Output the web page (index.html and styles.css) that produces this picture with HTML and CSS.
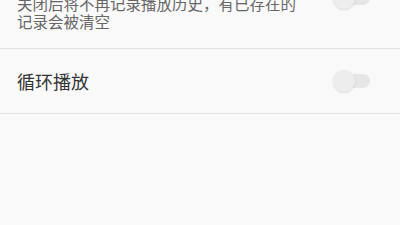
FILE: index.html
```html
<!DOCTYPE html>
<html lang="zh-CN">
<head>
    <meta charset="UTF-8">
    <meta name="viewport" content="width=device-width, initial-scale=1.0">
    <title>播放设置</title>
    <link rel="stylesheet" href="styles.css">
</head>
<body>
    <div class="settings">
        <div class="item item-top">
            <div class="item-text">
                <div class="summary">关闭后将不再记录播放历史，有已存在的记录会被清空</div>
            </div>
            <div class="toggle">
                <div class="track"></div>
                <div class="knob"></div>
            </div>
        </div>

        <div class="item item-single">
            <div class="item-text">
                <div class="title">循环播放</div>
            </div>
            <div class="toggle">
                <div class="track"></div>
                <div class="knob"></div>
            </div>
        </div>
    </div>
</body>
</html>
```

FILE: styles.css
```css
body {
    margin: 0;
    padding: 0;
    background-color: #f9f9f9;
    font-family: "Noto Sans CJK SC", "Noto Sans", sans-serif;
    overflow: hidden;
}

.settings {
    margin-top: -52px;
}

.item {
    display: flex;
    align-items: center;
    padding: 0 30px 0 17px;
    border-bottom: 1px solid #e2e2e2;
}

.item-top .item-text {
    padding-top: 46px;
    padding-bottom: 18px;
}

.item-single {
    height: 64px;
}

.item-text {
    flex: 1;
}

.summary {
    width: 284px;
    font-size: 15.5px;
    line-height: 18px;
    color: #666666;
}

.title {
    font-size: 18px;
    line-height: 24px;
    color: #333333;
}

.toggle {
    position: relative;
    width: 37px;
    height: 22px;
    flex-shrink: 0;
}

.track {
    position: absolute;
    right: 0;
    top: 4px;
    width: 34px;
    height: 14px;
    border-radius: 7px;
    background-color: #e6e6e6;
}

.knob {
    position: absolute;
    left: 0;
    top: 0;
    width: 22px;
    height: 22px;
    border-radius: 50%;
    background-color: #ededed;
    box-shadow: 0 1px 2px rgba(0, 0, 0, 0.12);
}
```
